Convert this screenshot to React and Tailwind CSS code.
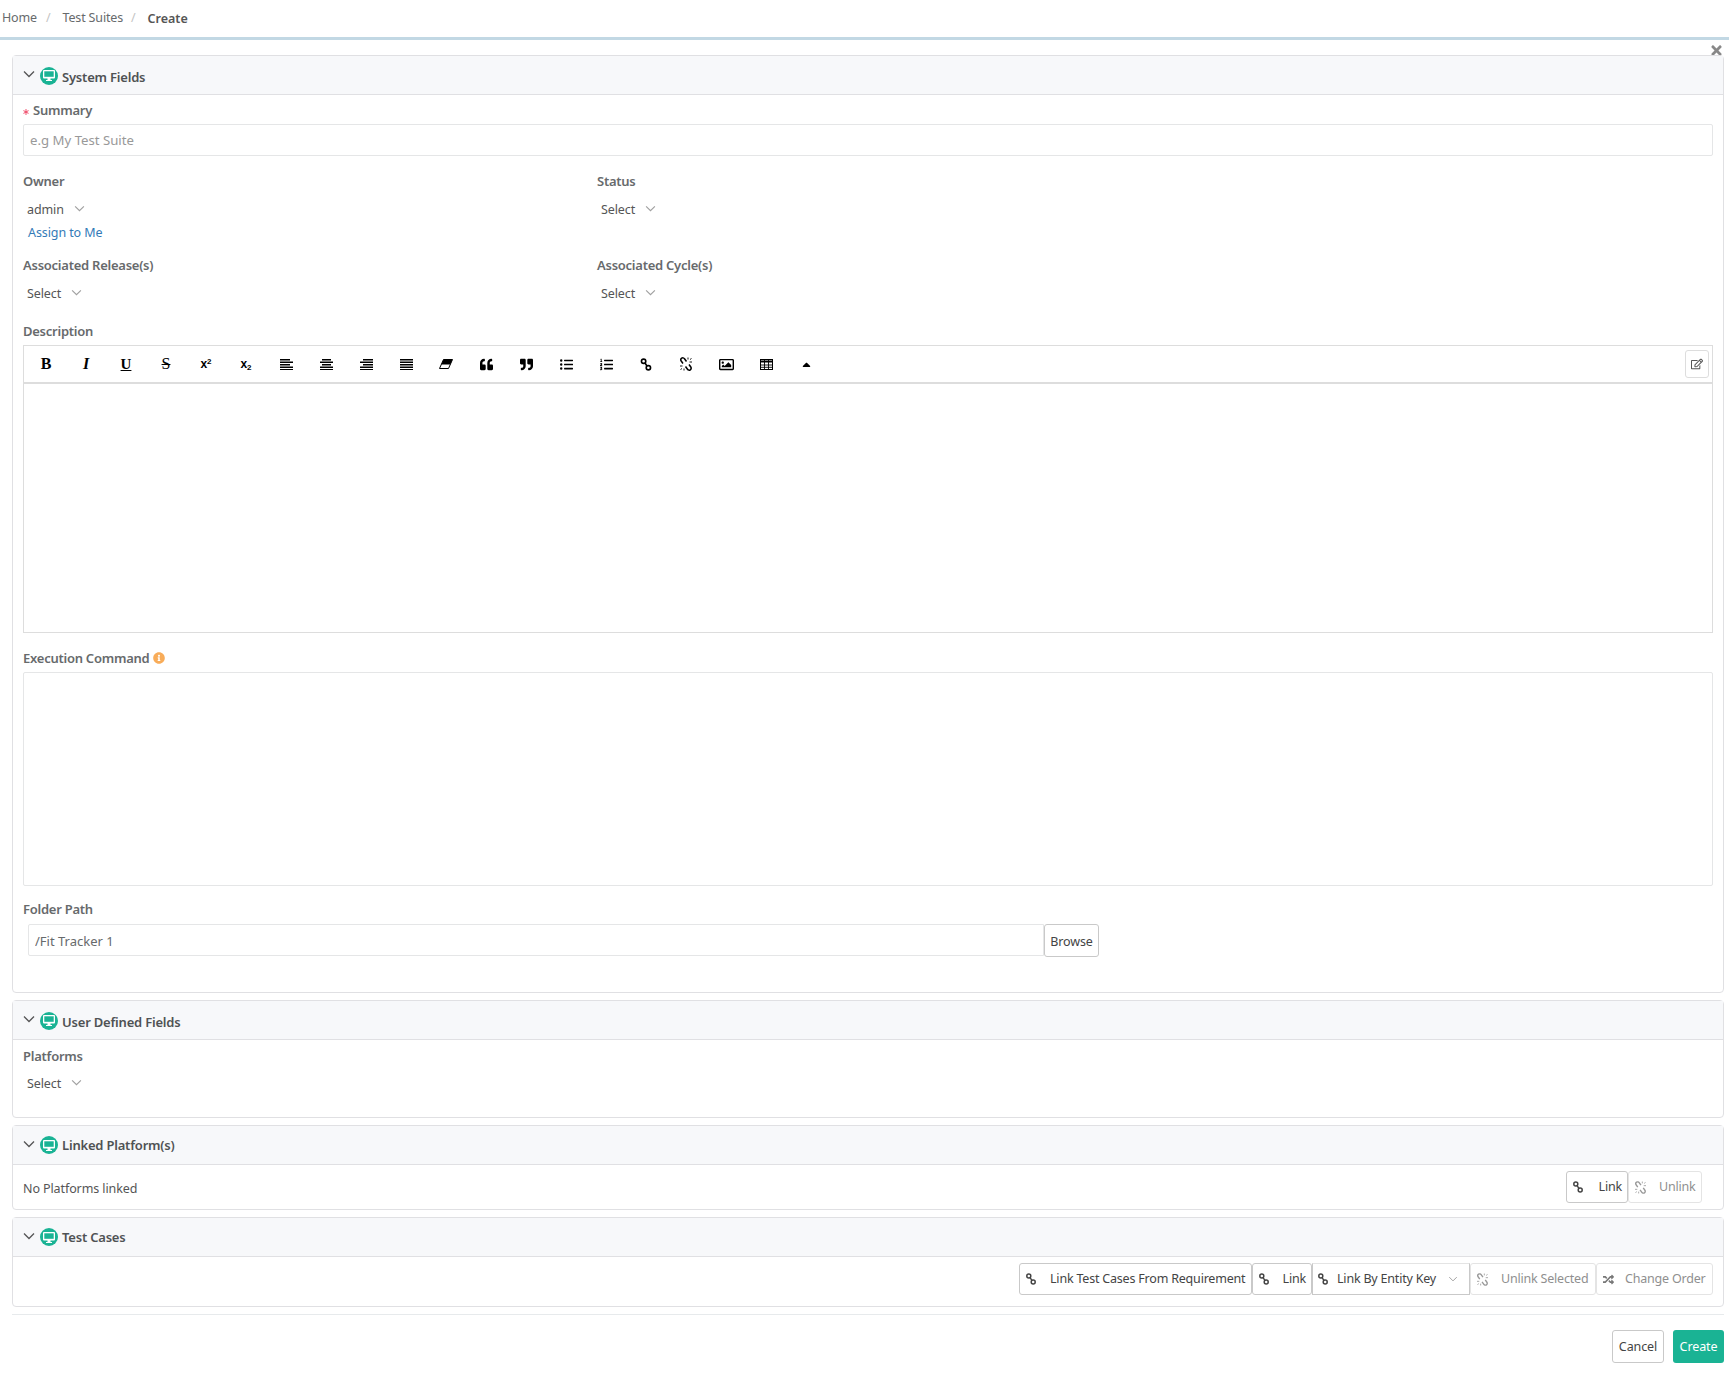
import { FaQuoteLeft, FaQuoteRight, FaListUl, FaListOl, FaRegImage, FaCaretUp, FaRegEdit, FaTimes, FaInfoCircle, FaRandom, FaAsterisk } from "react-icons/fa";

const font = "font-['Noto_Sans','Open_Sans',sans-serif]";

function Chevron({ className }) {
  return (
    <svg viewBox="0 0 12 8" className={className} fill="none" stroke="currentColor" strokeWidth="1.300">
      <path d="M1 1.500 6 6.500 11 1.500" />
    </svg>
  );
}

function Monitor() {
  return (
    <span className="grid h-[18px] w-[18px] place-items-center rounded-full bg-[#1ab394]">
      <svg viewBox="0 0 12 11" className="h-[11px] w-[12px]">
        <path d="M1 0h10a1 1 0 0 1 1 1v6.500a1 1 0 0 1-1 1H7.500V10H9v1H3v-1h1.500V8.500H1a1 1 0 0 1-1-1V1a1 1 0 0 1 1-1z" fill="#fff" />
        <rect x="1.300" y="1.300" width="9.400" height="5.500" fill="#1ab394" />
      </svg>
    </span>
  );
}

function LinkIcon({ className }) {
  return (
    <svg viewBox="0 0 10 12" className={className} fill="none" stroke="currentColor" strokeWidth="1.500">
      <circle cx="2.800" cy="3" r="2" />
      <circle cx="7.200" cy="9" r="2" />
      <path d="M4 4.600 6 7.400" />
    </svg>
  );
}

function UnlinkIcon({ className }) {
  return (
    <svg viewBox="0 0 12 14" className={className} fill="none" stroke="currentColor" strokeWidth="1.500">
      <path d="M6.500 4.500 4.500 1.700A2 2 0 0 0 1.200 4L3 6.500" />
      <path d="M5.500 9.500 7.500 12.300A2 2 0 0 0 10.800 10L9 7.500" />
      <path d="M8 .5v2M10 2.500l1.500-1M9.500 5h2.500M4 13.500v-2M2 11.500l-1.500 1M2.500 9H0" strokeWidth="0.900" />
    </svg>
  );
}

// stacked bars used for the four alignment buttons
function AlignIcon({ rows }) {
  return (
    <svg viewBox="0 0 13 11" className="h-[11px] w-[13px]" fill="currentColor">
      {rows.map(([x, w], i) => (
        <rect key={i} x={x} y={i * 2.500} width={w} height="1.500" />
      ))}
    </svg>
  );
}

function EraserIcon() {
  return (
    <svg viewBox="0 0 14 10" className="h-[10px] w-[14px]">
      <path d="M4.500.5h9l-4 9H.5z" fill="#fff" stroke="#000" />
      <path d="M4.500.5h9l-2.200 5H2.300z" fill="#000" />
    </svg>
  );
}

function TableIcon() {
  return (
    <svg viewBox="0 0 13 11" className="h-[11px] w-[13px]" fill="none" stroke="#000">
      <rect x=".5" y=".5" width="12" height="10" />
      <path d="M.5 2.500h12" strokeWidth="2" />
      <path d="M.5 6h12M.5 8.300h12M4.500.5v10M8.500.5v10" strokeWidth="0.900" />
    </svg>
  );
}

function Panel({ title, children, bodyClass, tight }) {
  return (
    <section className="rounded-sm border border-[#e0e0e3]">
      <header className="flex h-[39px] items-center border-b border-[#e0e0e3] bg-[#f7f8fa] pl-[10px]">
        <Chevron className="mb-[3px] h-[8px] w-[12px] text-[#555]" />
        <span className={`ml-[5px] ${tight ? "" : "pt-[1px]"}`}><Monitor /></span>
        <h3 className={`ml-[4px] text-[13px] font-semibold tracking-[-0.2px] text-[#4f5254] ${tight ? "pt-[2px]" : "pt-[6px]"}`}>{title}</h3>
      </header>
      <div className={bodyClass}>{children}</div>
    </section>
  );
}

function Label({ children }) {
  return <label className="block text-[13px] leading-[18px] font-semibold tracking-[-0.25px] text-[#676a6c]">{children}</label>;
}

function Select({ text = "Select" }) {
  return (
    <div className="flex h-[22px] items-center pl-[4px] text-[12.500px] tracking-[-0.1px] text-[#555]">
      <span>{text}</span>
      <Chevron className="mb-[3px] ml-[10px] h-[7px] w-[11px] text-[#a0a0a0]" />
    </div>
  );
}

function Btn({ icon, children, off, className = "", gap = "gap-[13px]" }) {
  return (
    <button className={`flex h-[32px] items-center rounded-[3px] border bg-white px-[5px] text-[12.500px] tracking-[-0.2px] ${gap} ${off ? "border-[#e4e4e4] text-[#8f8f8f]" : "border-[#c9c9c9] text-[#444]"} ${className}`}>
      <span className="flex w-[12px] justify-center">{icon}</span>
      <span className="whitespace-nowrap pt-[1px]">{children}</span>
    </button>
  );
}

const toolbar = [
  <span className="font-['Liberation_Serif',serif] text-[16px] font-bold">B</span>,
  <span className="font-['Liberation_Serif',serif] text-[16px] font-bold italic">I</span>,
  <span className="font-['Liberation_Serif',serif] text-[15px] font-bold underline">U</span>,
  <span className="font-['Liberation_Serif',serif] text-[16px] line-through">S</span>,
  <span className="font-['Liberation_Sans',sans-serif] text-[12px] font-bold">x<sup className="text-[8px]">2</sup></span>,
  <span className="font-['Liberation_Sans',sans-serif] text-[12px] font-bold">x<sub className="text-[8px]">2</sub></span>,
  <AlignIcon rows={[[0, 10], [0, 13], [0, 10], [0, 13], [0, 13]]} />,
  <AlignIcon rows={[[2, 9], [0, 13], [2, 9], [0, 13], [0, 13]]} />,
  <AlignIcon rows={[[3, 10], [0, 13], [3, 10], [0, 13], [0, 13]]} />,
  <AlignIcon rows={[[0, 13], [0, 13], [0, 13], [0, 13], [0, 13]]} />,
  <EraserIcon />,
  <FaQuoteLeft />,
  <FaQuoteRight />,
  <FaListUl />,
  <FaListOl />,
  <LinkIcon className="h-[13px] w-[12px]" />,
  <UnlinkIcon className="h-[14px] w-[12px]" />,
  <FaRegImage className="text-[15px]" />,
  <TableIcon />,
  <FaCaretUp />,
];

export default function App() {
  return (
    <div className={`${font} min-h-[1399px] bg-white`}>
      <nav className="flex h-[40px] items-center border-b-[3px] border-[#c2d8e4] pb-[1px] pl-[2px] text-[12.500px] tracking-[-0.15px] text-[#676a6c]">
        <a>Home</a>
        <span className="ml-[9px] text-[#c4c4c4]">/</span>
        <a className="ml-[12px]">Test Suites</a>
        <span className="ml-[8px] text-[#c4c4c4]">/</span>
        <strong className="ml-[12px] mt-[2px] font-semibold tracking-normal text-[#555]">Create</strong>
      </nav>

      <main className="pl-[12px] pr-[5px]">
        <div className="flex h-[15px] items-center justify-end pt-[6px]">
          <FaTimes className="text-[15px] text-[#888]" />
        </div>

        <div className="flex flex-col gap-[7px]">
          <Panel title="System Fields" bodyClass="h-[897px] pl-[10px] pr-[10px] pt-[6px]">
            <div className="flex items-center">
              <FaAsterisk className="mr-[4px] mt-[3px] text-[6px] text-[#f0506e]" />
              <Label>Summary</Label>
            </div>
            <input
              placeholder="e.g My Test Suite"
              className="mt-[5px] block h-[32px] w-full rounded-[2px] border border-[#e5e6e7] px-[6px] text-[13.200px] placeholder:text-[#999]"
            />

            <div className="mt-[16px] grid grid-cols-[574px_1fr]">
              <div>
                <Label>Owner</Label>
                <div className="mt-[9px]"><Select text="admin" /></div>
                <a className="mt-[3px] block pl-[5px] text-[12.500px] leading-[18px] tracking-[-0.1px] text-[#337ab7]">Assign to Me</a>
              </div>
              <div>
                <Label>Status</Label>
                <div className="mt-[9px]"><Select /></div>
              </div>
            </div>

            <div className="mt-[14px] grid grid-cols-[574px_1fr]">
              <div>
                <Label>Associated Release(s)</Label>
                <div className="mt-[9px]"><Select /></div>
              </div>
              <div>
                <Label>Associated Cycle(s)</Label>
                <div className="mt-[9px]"><Select /></div>
              </div>
            </div>

            <div className="mt-[17px]"><Label>Description</Label></div>
            <div className="mt-[5px] border border-[#ddd]">
              <div className="flex h-[38px] items-center justify-between border-b-2 border-[#ddd] pl-[2px] pr-[3px]">
                <div className="flex text-[13px] text-black">
                  {toolbar.map((icon, i) => (
                    <span key={i} className="grid h-[28px] w-[40px] place-items-center">{icon}</span>
                  ))}
                </div>
                <button className="grid h-[28px] w-[24px] place-items-center rounded-[3px] border border-[#ddd] text-[12px] text-[#555]">
                  <FaRegEdit />
                </button>
              </div>
              <div className="h-[248px]" />
            </div>

            <div className="mt-[16px] flex items-center gap-[4px]">
              <Label>Execution Command</Label>
              <FaInfoCircle className="text-[12px] text-[#f8ac59]" />
            </div>
            <textarea className="mt-[5px] block h-[214px] w-full resize-none rounded-[2px] border border-[#e5e6e7]" />

            <div className="mt-[14px]"><Label>Folder Path</Label></div>
            <div className="mt-[6px] flex w-[1076px] pl-[5px]">
              <input
                defaultValue="/Fit Tracker 1"
                className="h-[32px] flex-1 rounded-l-[2px] border border-[#e5e6e7] px-[6px] pt-[2px] text-[13px] text-[#676a6c]"
              />
              <button className="h-[33px] w-[55px] rounded-[3px] border border-[#c9c9c9] pt-[3px] text-[12.500px] tracking-[-0.1px] text-[#444]">Browse</button>
            </div>
          </Panel>

          <Panel title="User Defined Fields" bodyClass="h-[77px] pl-[10px] pt-[7px]">
            <Label>Platforms</Label>
            <div className="mt-[8px]"><Select /></div>
          </Panel>

          <Panel tight title="Linked Platform(s)" bodyClass="flex h-[44px] items-start justify-between pl-[10px] pr-[21px] pt-[6px]">
            <span className="mt-[9px] text-[12.500px] tracking-[-0.1px] text-[#555]">No Platforms linked</span>
            <div className="flex">
              <Btn className="w-[62px]" gap="gap-[15px]" icon={<LinkIcon className="h-[12px] w-[10px]" />}>Link</Btn>
              <Btn off className="w-[74px]" icon={<UnlinkIcon className="h-[13px] w-[11px] text-[#999]" />}>Unlink</Btn>
            </div>
          </Panel>

          <Panel tight title="Test Cases" bodyClass="flex h-[49px] items-start justify-end pr-[10px] pt-[6px]">
            <div className="flex">
              <Btn className="w-[233px]" icon={<LinkIcon className="h-[12px] w-[10px]" />}>Link Test Cases From Requirement</Btn>
              <Btn className="w-[60px]" icon={<LinkIcon className="h-[12px] w-[10px]" />}>Link</Btn>
              <button className="flex h-[32px] w-[158px] items-center gap-[9px] border border-[#c9c9c9] border-t-[#e4e4e4] bg-white px-[5px] text-[12.500px] tracking-[-0.2px] text-[#444]">
                <LinkIcon className="h-[12px] w-[10px]" />
                <span className="whitespace-nowrap pt-[1px]">Link By Entity Key</span>
                <Chevron className="ml-[3px] h-[6px] w-[10px] text-[#a0a0a0]" />
              </button>
              <Btn off className="w-[126px]" icon={<UnlinkIcon className="h-[13px] w-[11px] text-[#999]" />}>Unlink Selected</Btn>
              <Btn off className="w-[117px]" gap="gap-[11px]" icon={<FaRandom className="text-[11px] text-[#777]" />}>Change Order</Btn>
            </div>
          </Panel>
        </div>

        <footer className="mt-[7px] flex justify-end gap-[9px] border-t border-[#e7eaec] pt-[15px]">
          <button className="h-[33px] w-[52px] rounded-[3px] border border-[#c9c9c9] pt-[1px] text-[12.500px] tracking-[-0.1px] text-[#444]">Cancel</button>
          <button className="h-[33px] w-[51px] rounded-[3px] bg-[#1ab394] pt-[1px] text-[12.500px] tracking-[-0.1px] text-white">Create</button>
        </footer>
      </main>
    </div>
  );
}
